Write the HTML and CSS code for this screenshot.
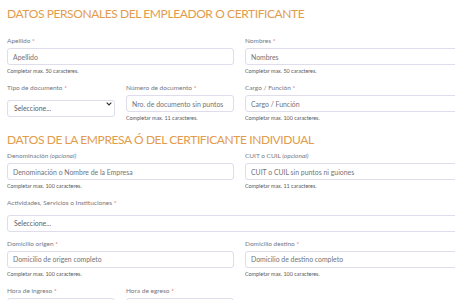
FILE: index.html
```html
<!DOCTYPE html>
<html lang="es">

<head>
    <meta charset="UTF-8">
    <meta name="viewport" content="width=device-width, initial-scale=1.0">
    <title>Certificado de circulación</title>
    <link rel="stylesheet" href="styles.css">
</head>

<body>
    <div class="page">
        <h2 class="section-title first">DATOS PERSONALES DEL EMPLEADOR O CERTIFICANTE</h2>

        <div class="row">
            <div class="field">
                <label>Apellido <span class="req">*</span></label>
                <input type="text" placeholder="Apellido">
                <small>Completar max. 50 caracteres.</small>
            </div>
            <div class="field">
                <label>Nombres <span class="req">*</span></label>
                <input type="text" placeholder="Nombres">
                <small>Completar max. 50 caracteres.</small>
            </div>
        </div>

        <div class="row">
            <div class="row inner">
                <div class="field">
                    <label>Tipo de documento <span class="req">*</span></label>
                    <div class="select-wrap">
                        <select>
                            <option>Seleccione...</option>
                        </select>
                        <svg class="chevron" width="6" height="4" viewBox="0 0 6 4">
                            <path d="M0.7 0.7 L3 3 L5.3 0.7" fill="none" stroke="#333" stroke-width="1.2" />
                        </svg>
                    </div>
                </div>
                <div class="field">
                    <label>Número de documento <span class="req">*</span></label>
                    <input type="text" placeholder="Nro. de documento sin puntos">
                    <small>Completar max. 11 caracteres.</small>
                </div>
            </div>
            <div class="field">
                <label>Cargo / Función <span class="req">*</span></label>
                <input type="text" placeholder="Cargo / Función">
                <small>Completar max. 100 caracteres.</small>
            </div>
        </div>

        <h2 class="section-title">DATOS DE LA EMPRESA Ó DEL CERTIFICANTE INDIVIDUAL</h2>

        <div class="row">
            <div class="field">
                <label>Denominación <em>(opcional)</em></label>
                <input type="text" placeholder="Denominación o Nombre de la Empresa">
                <small>Completar max. 100 caracteres.</small>
            </div>
            <div class="field">
                <label>CUIT o CUIL <em>(opcional)</em></label>
                <input type="text" placeholder="CUIT o CUIL sin puntos ni guiones">
                <small>Completar max. 11 caracteres.</small>
            </div>
        </div>

        <div class="row single">
            <div class="field">
                <label>Actividades, Servicios o Instituciones <span class="req">*</span></label>
                <div class="select-wrap">
                    <select>
                        <option>Seleccione...</option>
                    </select>
                    <svg class="chevron" width="6" height="4" viewBox="0 0 6 4">
                        <path d="M0.7 0.7 L3 3 L5.3 0.7" fill="none" stroke="#333" stroke-width="1.2" />
                    </svg>
                </div>
            </div>
        </div>

        <div class="row">
            <div class="field">
                <label>Domicilio origen <span class="req">*</span></label>
                <input type="text" placeholder="Domicilio de origen completo">
                <small>Completar max. 100 caracteres.</small>
            </div>
            <div class="field">
                <label>Domicilio destino <span class="req">*</span></label>
                <input type="text" placeholder="Domicilio de destino completo">
                <small>Completar max. 100 caracteres.</small>
            </div>
        </div>

        <div class="row">
            <div class="row inner">
                <div class="field">
                    <label>Hora de ingreso <span class="req">*</span></label>
                    <input type="time">
                </div>
                <div class="field">
                    <label>Hora de egreso <span class="req">*</span></label>
                    <input type="time">
                </div>
            </div>
        </div>
    </div>
</body>

</html>
```

FILE: styles.css
```css
html,
body {
    overflow: hidden;
}

body {
    margin: 0;
    background: #ffffff;
    font-family: Lato, "Open Sans", sans-serif;
    color: #6b6b76;
}

.page {
    width: 465px;
    padding-left: 7px;
}

.section-title {
    margin: 9px 0 2px;
    font-size: 12px;
    line-height: 16px;
    font-weight: 400;
    letter-spacing: -0.4px;
    color: #e29c4c;
}

.section-title.first {
    margin: 6px 0 13px;
}

.row {
    display: grid;
    grid-template-columns: 1fr 1fr;
    column-gap: 11px;
    margin-bottom: 6px;
}

.row.inner {
    margin-bottom: 0;
}

.row.single {
    grid-template-columns: 1fr;
}

.field {
    display: flex;
    flex-direction: column;
    min-width: 0;
}

label {
    font-size: 6.5px;
    line-height: 12px;
    margin-bottom: 1px;
    color: #77777f;
}

label em {
    font-style: italic;
}

.req {
    color: #e05a5a;
}

input,
select {
    box-sizing: border-box;
    width: 100%;
    height: 17px;
    margin: 0;
    padding: 0 5px;
    border: 1px solid #dfdcec;
    border-radius: 3px;
    background: #ffffff;
    font-family: Lato, "Open Sans", sans-serif;
    font-size: 6.9px;
    color: #606066;
    outline: none;
}

input::placeholder {
    color: #737379;
}

select {
    appearance: none;
    padding-left: 6px;
}

.select-wrap {
    position: relative;
}

.chevron {
    position: absolute;
    right: 3px;
    top: 7px;
}

small {
    margin-top: 1px;
    font-size: 5.4px;
    line-height: 10px;
    color: #5a5a60;
}
```
